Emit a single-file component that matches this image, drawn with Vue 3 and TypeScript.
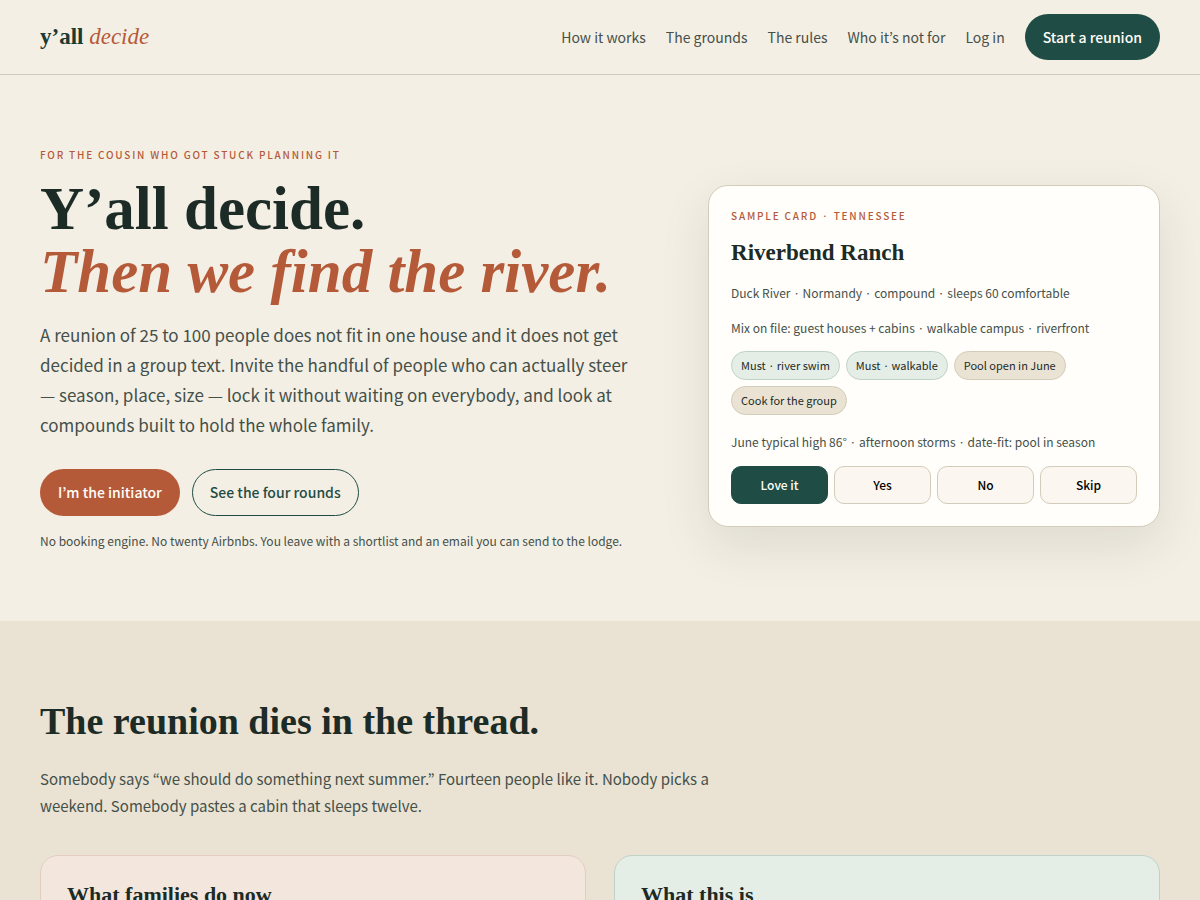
<script setup lang="ts">
interface NavLink {
  label: string
  href: string
}

interface Chip {
  label: string
  must: boolean
}

const navLinks: NavLink[] = [
  { label: 'How it works', href: '#how' },
  { label: 'The grounds', href: '#grounds' },
  { label: 'The rules', href: '#rules' },
  { label: 'Who it’s not for', href: '#not-for' },
  { label: 'Log in', href: '#login' },
]

const chips: Chip[] = [
  { label: 'Must · river swim', must: true },
  { label: 'Must · walkable', must: true },
  { label: 'Pool open in June', must: false },
  { label: 'Cook for the group', must: false },
]

const votes: string[] = ['Love it', 'Yes', 'No', 'Skip']
const selectedVote = 'Love it'
</script>

<template>
  <div class="page">
    <header class="site-header">
      <a class="brand" href="#top">y’all <em>decide</em></a>
      <nav class="nav">
        <a v-for="link in navLinks" :key="link.href" class="nav-link" :href="link.href">{{ link.label }}</a>
        <a class="btn btn-forest" href="#start">Start a reunion</a>
      </nav>
    </header>

    <main>
      <section class="hero">
        <div class="hero-copy">
          <p class="eyebrow">For the cousin who got stuck planning it</p>
          <h1>Y’all decide.<br /><em>Then we find the river.</em></h1>
          <p class="lead">
            A reunion of 25 to 100 people does not fit in one house and it does not get decided in a group text.
            Invite the handful of people who can actually steer — season, place, size — lock it without waiting on
            everybody, and look at compounds built to hold the whole family.
          </p>
          <div class="actions">
            <a class="btn btn-rust" href="#start">I’m the initiator</a>
            <a class="btn btn-outline" href="#how">See the four rounds</a>
          </div>
          <p class="note">
            No booking engine. No twenty Airbnbs. You leave with a shortlist and an email you can send to the lodge.
          </p>
        </div>

        <article class="sample">
          <p class="eyebrow">Sample card · Tennessee</p>
          <h3>Riverbend Ranch</h3>
          <p class="detail">Duck River · Normandy · compound · sleeps 60 comfortable</p>
          <p class="detail">Mix on file: guest houses + cabins · walkable campus · riverfront</p>
          <ul class="chips">
            <li v-for="chip in chips" :key="chip.label" class="chip" :class="{ must: chip.must }">{{ chip.label }}</li>
          </ul>
          <p class="detail">June typical high 86° · afternoon storms · date-fit: pool in season</p>
          <div class="votes">
            <button
              v-for="vote in votes"
              :key="vote"
              type="button"
              class="vote"
              :class="{ selected: vote === selectedVote }"
            >
              {{ vote }}
            </button>
          </div>
        </article>
      </section>

      <section class="thread">
        <h2>The reunion dies in the thread.</h2>
        <p class="thread-copy">
          Somebody says “we should do something next summer.” Fourteen people like it. Nobody picks a weekend.
          Somebody pastes a cabin that sleeps twelve.
        </p>
        <div class="compare">
          <article class="panel blush"><h3>What families do now</h3></article>
          <article class="panel mint"><h3>What this is</h3></article>
        </div>
      </section>
    </main>
  </div>
</template>

<style>
body {
  margin: 0;
  background: #f4efe4;
}
</style>

<style scoped>
.page {
  --ink: #1c2b26;
  --muted: #45504a;
  --forest: #1f4d45;
  --rust: #b55a38;
  --line: #d3ccba;
  --sand: #eae3d3;
  --mint: #e5eee6;
  --serif: "Liberation Serif", serif;
  color: var(--ink);
  font-family: "Noto Sans CJK KR", "Noto Sans", sans-serif;
  font-size: 15px;
  line-height: 24px;
}

h1,
h2,
h3,
p,
ul {
  margin: 0;
  padding: 0;
}

h1,
h2,
h3 {
  font-family: var(--serif);
  font-weight: 700;
}

a {
  color: inherit;
  text-decoration: none;
}

.site-header {
  display: flex;
  align-items: center;
  justify-content: space-between;
  padding: 14px 40px;
  border-bottom: 1px solid #cfcabb;
}

.brand {
  font-family: var(--serif);
  font-size: 23px;
  font-weight: 700;
  color: #1a3a32;
}

.brand em {
  font-weight: 400;
  color: var(--rust);
}

.nav {
  display: flex;
  align-items: center;
  gap: 20px;
}

.nav-link {
  font-size: 14px;
  color: var(--muted);
}

.btn {
  padding: 10px 17px;
  border: 1px solid transparent;
  border-radius: 999px;
  font-size: 14px;
  font-weight: 500;
}

.btn-forest {
  background: var(--forest);
  color: #fffefa;
}

.btn-rust {
  background: var(--rust);
  color: #fffefa;
}

.btn-outline {
  border-color: var(--forest);
  color: var(--forest);
}

.hero {
  display: grid;
  grid-template-columns: 1.35fr 1fr;
  align-items: center;
  gap: 58px;
  padding: 72px 40px 56px;
}

.eyebrow {
  font-size: 10px;
  font-weight: 500;
  line-height: 16px;
  letter-spacing: 0.18em;
  text-transform: uppercase;
  color: var(--rust);
}

h1 {
  margin-top: 14px;
  font-size: 61px;
  line-height: 63px;
}

h1 em {
  color: var(--rust);
}

.lead {
  max-width: 600px;
  margin-top: 17px;
  font-size: 17px;
  line-height: 30px;
  color: var(--muted);
}

.actions {
  display: flex;
  flex-wrap: wrap;
  gap: 12px;
  margin-top: 29px;
}

.actions .btn {
  line-height: 25px;
}

.note {
  margin: 15px 0 14px;
  font-size: 12px;
  line-height: 20px;
  color: var(--muted);
}

.sample {
  padding: 22px;
  border: 1px solid var(--line);
  border-radius: 20px;
  background: #fffefa;
  box-shadow: 0 18px 50px rgba(28, 43, 38, 0.1);
}

.sample h3 {
  margin: 14px 0;
  font-size: 23px;
  line-height: 30px;
}

.detail {
  margin-top: 14px;
  font-size: 12px;
  line-height: 21px;
  color: var(--muted);
}

.chips {
  display: flex;
  flex-wrap: wrap;
  gap: 6px;
  margin: 13px 0 16px;
  list-style: none;
}

.chip {
  padding: 4px 9px;
  border: 1px solid var(--line);
  border-radius: 999px;
  background: var(--sand);
  font-size: 11px;
  line-height: 19px;
}

.chip.must {
  border-color: #bfd2c8;
  background: var(--mint);
}

.votes {
  display: grid;
  grid-template-columns: repeat(4, 1fr);
  gap: 6px;
  margin-top: 14px;
}

.vote {
  padding: 8px 4px;
  border: 1px solid var(--line);
  border-radius: 10px;
  background: #fbf7f0;
  color: #000;
  font-family: inherit;
  font-size: 12px;
  font-weight: 500;
  line-height: 20px;
}

.vote.selected {
  border-color: var(--forest);
  background: var(--forest);
  color: #fffefa;
}

.thread {
  padding: 76px 40px 72px;
  background: var(--sand);
}

h2 {
  font-size: 38px;
  line-height: 48px;
}

.thread-copy {
  max-width: 700px;
  margin-top: 20px;
  font-size: 15px;
  line-height: 27px;
  color: var(--muted);
}

.compare {
  display: grid;
  grid-template-columns: 1fr 1fr;
  gap: 28px;
  margin-top: 36px;
}

.panel {
  padding: 26px;
  border: 1px solid #e3cdbf;
  border-radius: 18px;
}

.panel h3 {
  font-size: 22px;
  line-height: 26px;
}

.blush {
  background: #f3e6dc;
}

.mint {
  border-color: #bfd2c8;
  background: var(--mint);
}
</style>
